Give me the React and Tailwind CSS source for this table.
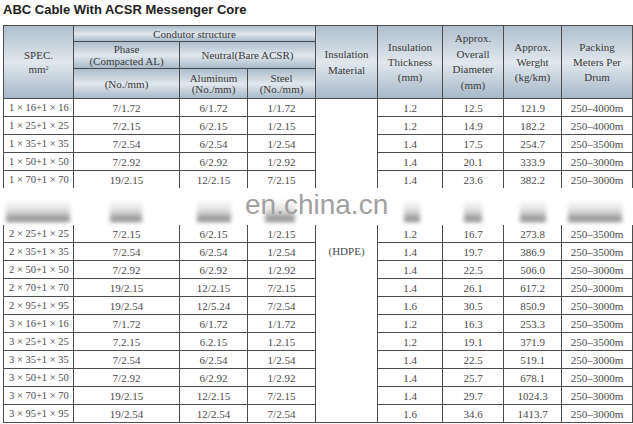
import React from 'react';

const rowsTop = [
  ['1 × 16+1 × 16', '7/1.72', '6/1.72', '1/1.72', '1.2', '12.5', '121.9', '250–4000m'],
  ['1 × 25+1 × 25', '7/2.15', '6/2.15', '1/2.15', '1.2', '14.9', '182.2', '250–4000m'],
  ['1 × 35+1 × 35', '7/2.54', '6/2.54', '1/2.54', '1.4', '17.5', '254.7', '250–3500m'],
  ['1 × 50+1 × 50', '7/2.92', '6/2.92', '1/2.92', '1.4', '20.1', '333.9', '250–3000m'],
  ['1 × 70+1 × 70', '19/2.15', '12/2.15', '7/2.15', '1.4', '23.6', '382.2', '250–3000m'],
];

const rowsBottom = [
  ['2 × 25+1 × 25', '7/2.15', '6/2.15', '1/2.15', '1.2', '16.7', '273.8', '250–3500m'],
  ['2 × 35+1 × 35', '7/2.54', '6/2.54', '1/2.54', '1.4', '19.7', '386.9', '250–3500m'],
  ['2 × 50+1 × 50', '7/2.92', '6/2.92', '1/2.92', '1.4', '22.5', '506.0', '250–3000m'],
  ['2 × 70+1 × 70', '19/2.15', '12/2.15', '7/2.15', '1.4', '26.1', '617.2', '250–3000m'],
  ['2 × 95+1 × 95', '19/2.54', '12/5.24', '7/2.54', '1.6', '30.5', '850.9', '250–3000m'],
  ['3 × 16+1 × 16', '7/1.72', '6/1.72', '1/1.72', '1.2', '16.3', '253.3', '250–3500m'],
  ['3 × 25+1 × 25', '7.2.15', '6.2.15', '1.2.15', '1.2', '19.1', '371.9', '250–3500m'],
  ['3 × 35+1 × 35', '7/2.54', '6/2.54', '1/2.54', '1.4', '22.5', '519.1', '250–3000m'],
  ['3 × 50+1 × 50', '7/2.92', '6/2.92', '1/2.92', '1.4', '25.7', '678.1', '250–3000m'],
  ['3 × 70+1 × 70', '19/2.15', '12/2.15', '7/2.15', '1.4', '29.7', '1024.3', '250–3000m'],
  ['3 × 95+1 × 95', '19/2.54', '12/2.54', '7/2.54', '1.6', '34.6', '1413.7', '250–3000m'],
];

// header cell look: metallic blue-grey (line height added per cell)
const th = 'border border-[#4d4d4d] bg-linear-to-b from-[#afbfce] via-[#e1e7ed] to-[#a6b8c8] font-normal text-center align-middle text-[#3a3a3a] p-0';
const td = 'border border-[#4d4d4d] text-center align-middle p-0 h-[18px] leading-[16px]';

// blurred patches left by the watermark
const smudges = [
  'left-[6px] w-[64px]',
  'left-[110px] w-[32px]',
  'left-[197px] w-[34px]',
  'left-[265px] w-[30px]',
  'left-[404px] w-[16px]',
  'left-[464px] w-[18px]',
  'left-[520px] w-[26px]',
  'left-[568px] w-[54px]',
];

const DataRow = ({ r, first }) => (
  <tr>
    <td className={`${td} text-left pl-[5px] text-[10.5px]`}>{r[0]}</td>
    <td className={td}>{r[1]}</td>
    <td className={td}>{r[2]}</td>
    <td className={td}>{r[3]}</td>
    {first && (
      <td rowSpan={18} className="border border-[#4d4d4d] text-center align-middle pb-[18px]">
        (HDPE)
      </td>
    )}
    <td className={td}>{r[4]}</td>
    <td className={td}>{r[5]}</td>
    <td className={td}>{r[6]}</td>
    <td className={td}>{r[7]}</td>
  </tr>
);

export default function App() {
  return (
    <div className="w-[633px] h-[424px] overflow-hidden bg-white">
      <h1 className="pt-[2px] pl-[3px] text-[13px] leading-[15px] font-bold text-[#222] font-['Liberation_Sans',Arial,sans-serif]">
        ABC Cable With ACSR Messenger Core
      </h1>

      <div className="relative mt-[8px] ml-[3px] w-[630px]">
        <table className="table-fixed border-collapse w-[629px] text-[11px] text-[#4a4a4a] font-['Liberation_Serif','Times_New_Roman',serif]">
          <colgroup>
            <col className="w-[70px]" />
            <col className="w-[106px]" />
            <col className="w-[68px]" />
            <col className="w-[68px]" />
            <col className="w-[62px]" />
            <col className="w-[65px]" />
            <col className="w-[61px]" />
            <col className="w-[58px]" />
            <col className="w-[71px]" />
          </colgroup>
          <thead>
            <tr className="h-[16px]">
              <th rowSpan={3} className={`${th} leading-[14px]`}>
                SPEC.
                <br />
                mm<sup className="text-[6px] leading-none">2</sup>
              </th>
              <th colSpan={3} className={`${th} leading-[14px]`}>Condutor structure</th>
              <th rowSpan={3} className={`${th} leading-[16px]`}>
                Insulation
                <br />
                Material
              </th>
              <th rowSpan={3} className={`${th} leading-[15px]`}>
                Insulation
                <br />
                Thickness
                <br />
                (mm)
              </th>
              <th rowSpan={3} className={`${th} leading-[15.5px]`}>
                Approx.
                <br />
                Overall
                <br />
                Diameter
                <br />
                (mm)
              </th>
              <th rowSpan={3} className={`${th} leading-[15px]`}>
                Approx.
                <br />
                Werght
                <br />
                (kg/km)
              </th>
              <th rowSpan={3} className={`${th} leading-[15px]`}>
                Packing
                <br />
                Meters Per
                <br />
                Drum
              </th>
            </tr>
            <tr className="h-[27px]">
              <th className={`${th} leading-[12px]`}>
                Phase
                <br />
                (Compacted AL)
              </th>
              <th colSpan={2} className={`${th} leading-[14px]`}>Neutral(Bare ACSR)</th>
            </tr>
            <tr className="h-[30px]">
              <th className={`${th} leading-[14px]`}>(No./mm)</th>
              <th className={`${th} leading-[11px]`}>
                Aluminum
                <br />
                (No./mm)
              </th>
              <th className={`${th} leading-[11px]`}>
                Steel
                <br />
                (No./mm)
              </th>
            </tr>
          </thead>
          <tbody>
            {rowsTop.map((r, i) => (
              <DataRow key={r[0]} r={r} first={i === 0} />
            ))}
            {[0, 1].map((k) => (
              <tr key={'band' + k}>
                {[0, 1, 2, 3, 4, 5, 6, 7].map((c) => (
                  <td key={c} className={td}></td>
                ))}
              </tr>
            ))}
            {rowsBottom.map((r) => (
              <DataRow key={r[0]} r={r} />
            ))}
          </tbody>
        </table>

        {/* watermark band over the table */}
        <div className="absolute left-[-3px] w-[633px] top-[163px] h-[37px] bg-white pointer-events-none">
          {smudges.map((s, i) => (
            <div
              key={i}
              className={`absolute ${s} top-[12px] h-[22px] bg-linear-to-b from-transparent via-[#d0d0d0] to-[#555] blur-[2px] opacity-75`}
            />
          ))}
          <div className="absolute left-[245px] top-[3px] text-[28px] leading-[28px] text-[#a0a0a0] font-['Liberation_Sans',Arial,sans-serif]">
            en.china.cn
          </div>
        </div>
      </div>
    </div>
  );
}
